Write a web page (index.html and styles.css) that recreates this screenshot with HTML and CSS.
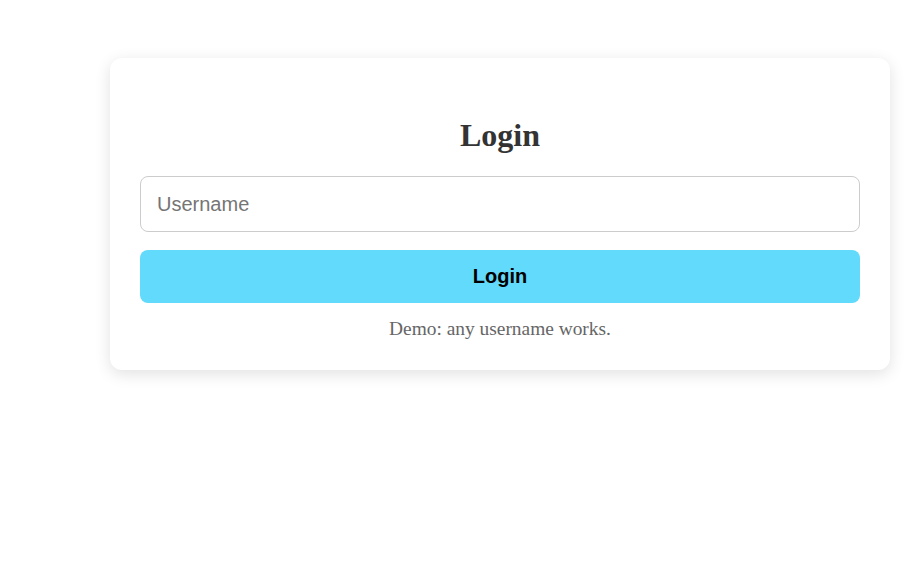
FILE: index.html
```html
<!DOCTYPE html>
<html>
<head>
<meta charset="utf-8">
<link rel="stylesheet" href="styles.css">
</head>
<body>
<div class="page">
  <form class="card">
    <h2 class="title">Login</h2>
    <input class="field" type="text" placeholder="Username">
    <button class="btn" type="button">Login</button>
    <p class="hint">Demo: any username works.</p>
  </form>
</div>
</body>
</html>
```
FILE: styles.css
```css
html, body {
  margin: 0;
  padding: 0;
  background: #ffffff;
}
.page {
  padding: 58px 16px 40px 110px;
  display: flex;
}
.card {
  box-sizing: border-box;
  width: 780px;
  height: 312px;
  margin: 0;
  padding: 30px 30px 30px;
  background: #ffffff;
  border-radius: 12px;
  box-shadow: 0 4px 16px rgba(0, 0, 0, 0.12);
  display: flex;
  flex-direction: column;
  font-family: "Liberation Serif", "Times New Roman", serif;
}
.title {
  margin: 29px 0 22px;
  font-size: 32px;
  font-weight: bold;
  text-align: center;
  color: #333333;
  line-height: 37px;
}
.field {
  box-sizing: border-box;
  width: 100%;
  height: 56px;
  margin: 0;
  padding: 0 16px;
  border: 1px solid #cccccc;
  border-radius: 8px;
  font-family: "Liberation Sans", Arial, sans-serif;
  font-size: 20px;
  color: #333;
  outline: none;
}
.field::placeholder {
  color: #757575;
}
.btn {
  box-sizing: border-box;
  width: 100%;
  height: 53px;
  margin: 18px 0 0;
  border: none;
  border-radius: 8px;
  background: #61dafb;
  color: #000000;
  font-family: "Liberation Sans", Arial, sans-serif;
  font-size: 20px;
  font-weight: bold;
}
.hint {
  margin: 15px 0 0;
  text-align: center;
  font-size: 19.4px;
  line-height: 22px;
  color: #666666;
}
```
